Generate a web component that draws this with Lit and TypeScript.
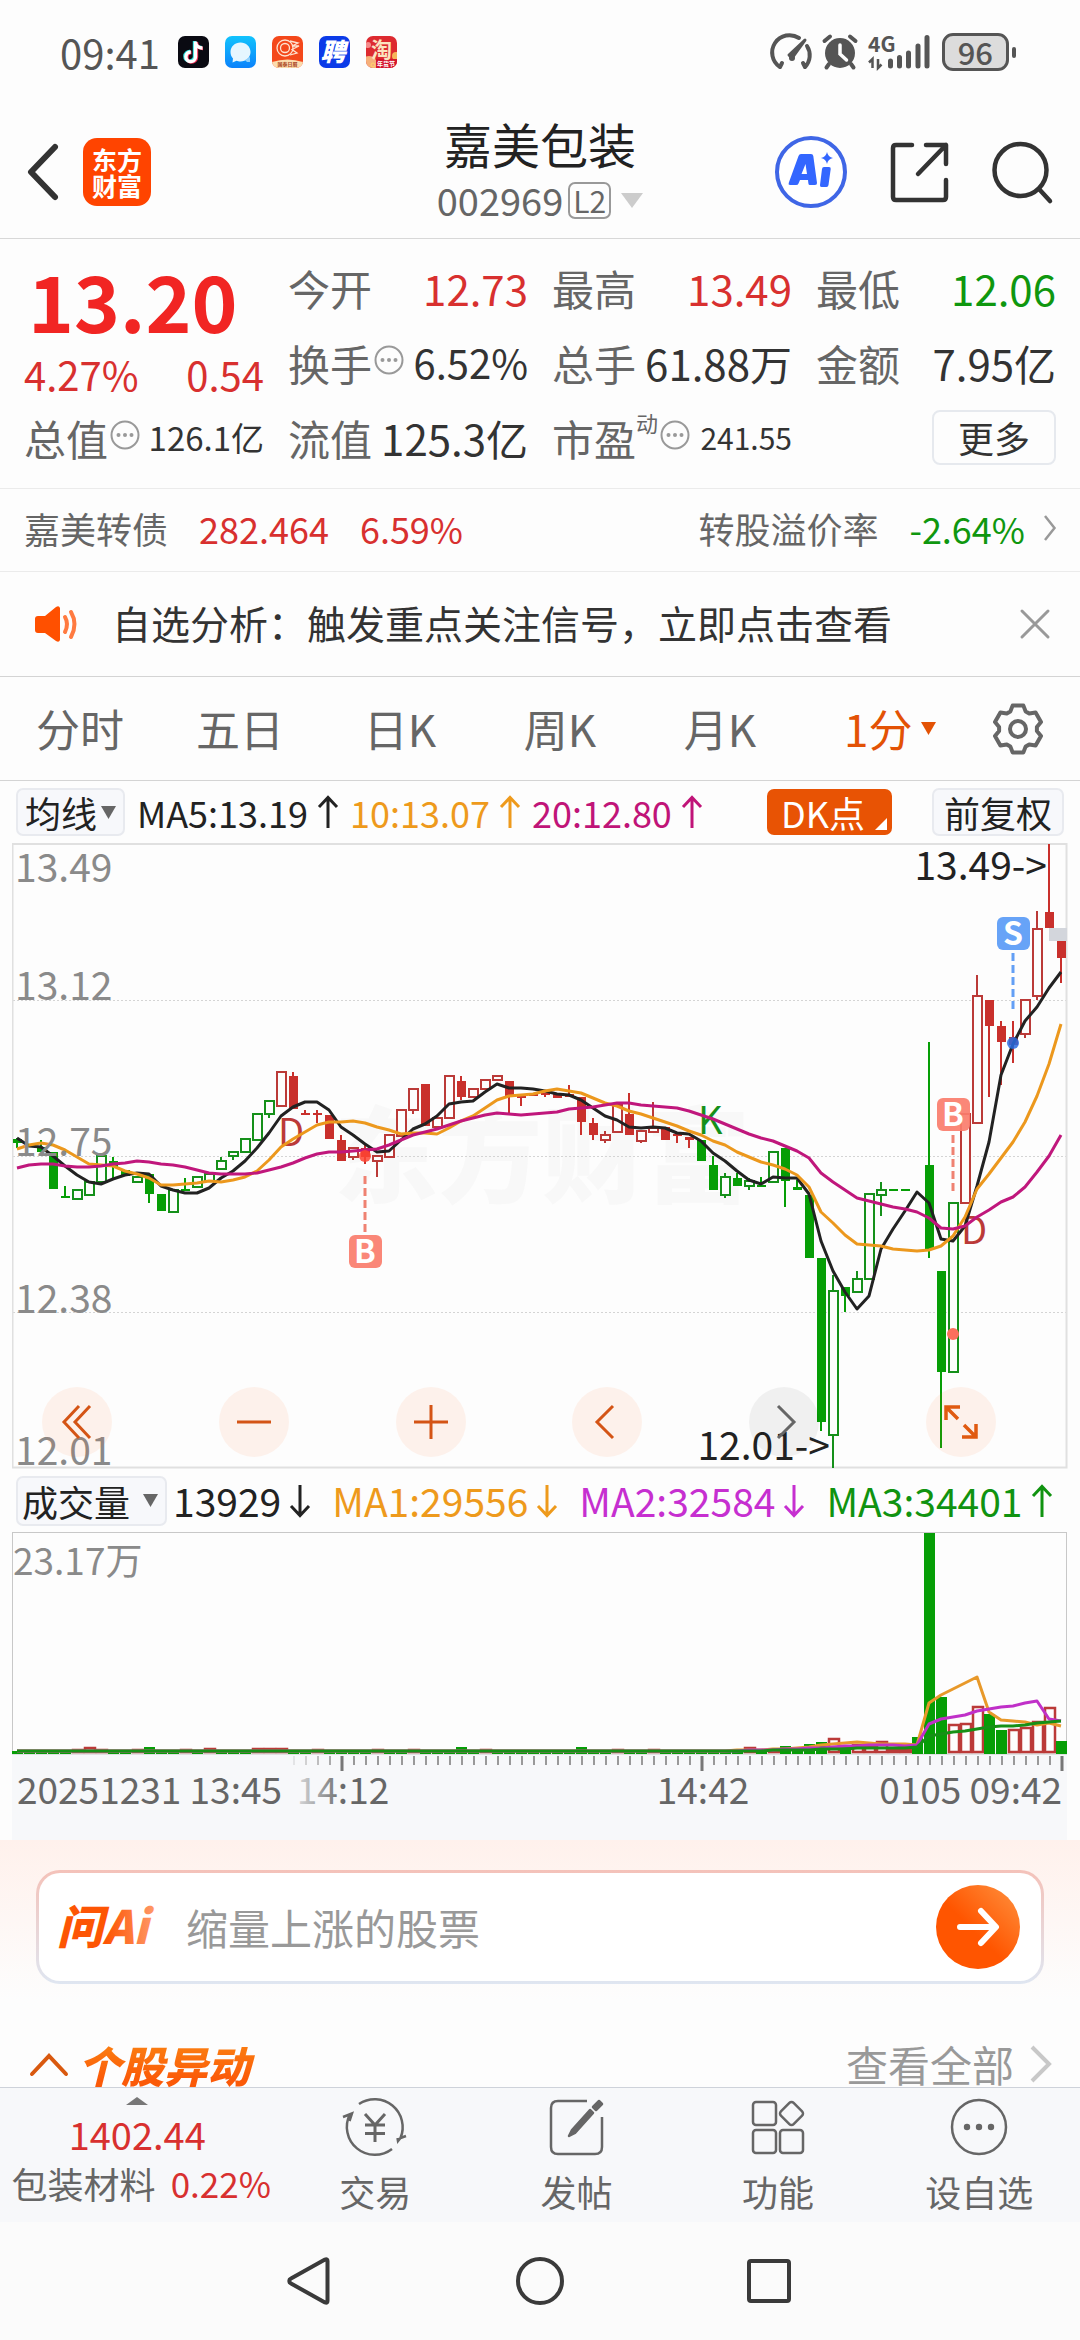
import { LitElement, html, svg, css } from "lit";
import { customElement } from "lit/decorators.js";
import { classMap } from "lit/directives/class-map.js";

const RED = "#c9302c";
const GREEN = "#069e06";
const HOLLOW_RED = "#bb3a38";
const HOLLOW_GREEN = "#15901a";

/* Candle: index, direction (r/g), filled (1) or hollow (0), body top, body bottom, wick top, wick bottom */
type Candle = [number, "r" | "g", 0 | 1, number, number, number, number];

const CANDLES: Candle[] = [
  [0, "g", 1, 1140, 1144, 1139, 1149], [2, "g", 1, 1148, 1153, 1141, 1153], [3, "g", 1, 1153, 1190, 1153, 1190],
  [4, "g", 1, 1197, 1199, 1187, 1199], [5, "g", 0, 1191, 1200, 1191, 1200], [6, "g", 0, 1183, 1196, 1183, 1196],
  [7, "g", 0, 1157, 1183, 1157, 1183], [8, "g", 1, 1162, 1168, 1158, 1179], [9, "g", 1, 1171, 1177, 1171, 1177],
  [10, "g", 0, 1178, 1183, 1178, 1183], [11, "g", 1, 1175, 1195, 1175, 1204], [12, "g", 1, 1195, 1212, 1195, 1212],
  [13, "g", 0, 1191, 1213, 1191, 1213], [14, "g", 1, 1190, 1192, 1179, 1192], [15, "g", 0, 1178, 1188, 1178, 1188],
  [16, "g", 0, 1175, 1182, 1175, 1182], [17, "g", 0, 1162, 1170, 1158, 1170], [18, "g", 0, 1153, 1157, 1153, 1161],
  [19, "g", 0, 1140, 1153, 1140, 1153], [20, "g", 0, 1115, 1141, 1115, 1141], [21, "g", 0, 1102, 1115, 1102, 1119],
  [22, "r", 0, 1073, 1107, 1073, 1107], [23, "r", 1, 1077, 1110, 1073, 1110], [24, "r", 1, 1114, 1116, 1111, 1116],
  [25, "r", 1, 1114, 1116, 1111, 1124], [26, "r", 1, 1116, 1140, 1116, 1140], [27, "r", 1, 1141, 1162, 1136, 1162],
  [28, "r", 0, 1149, 1158, 1149, 1161], [29, "r", 1, 1149, 1158, 1146, 1165], [30, "r", 0, 1157, 1162, 1157, 1178],
  [31, "r", 0, 1136, 1158, 1136, 1158], [32, "r", 0, 1111, 1137, 1111, 1137], [33, "r", 0, 1090, 1111, 1090, 1115],
  [34, "r", 1, 1085, 1127, 1085, 1127], [35, "r", 0, 1119, 1128, 1119, 1128], [36, "r", 0, 1077, 1119, 1077, 1119],
  [37, "r", 1, 1082, 1098, 1077, 1101], [38, "r", 0, 1090, 1098, 1090, 1098], [39, "r", 0, 1081, 1090, 1081, 1090],
  [40, "r", 0, 1077, 1081, 1077, 1081], [41, "r", 1, 1082, 1098, 1082, 1115], [42, "r", 1, 1097, 1099, 1095, 1107],
  [43, "r", 1, 1094, 1097, 1094, 1097], [44, "r", 1, 1094, 1096, 1094, 1098], [45, "r", 1, 1094, 1099, 1094, 1099],
  [46, "r", 1, 1095, 1098, 1086, 1098], [47, "r", 1, 1098, 1123, 1098, 1136], [48, "r", 1, 1124, 1136, 1119, 1141],
  [49, "r", 0, 1136, 1141, 1132, 1144], [50, "r", 0, 1106, 1133, 1106, 1133], [51, "r", 1, 1115, 1136, 1094, 1136],
  [52, "r", 0, 1132, 1142, 1132, 1144], [53, "r", 0, 1129, 1133, 1103, 1133], [54, "r", 1, 1128, 1141, 1128, 1141],
  [55, "r", 1, 1135, 1137, 1135, 1144], [56, "r", 1, 1138, 1141, 1138, 1149], [57, "g", 1, 1141, 1162, 1141, 1162],
  [58, "g", 1, 1166, 1191, 1157, 1191], [59, "g", 0, 1178, 1196, 1174, 1199], [60, "g", 1, 1179, 1187, 1174, 1187],
  [61, "g", 0, 1182, 1187, 1179, 1191], [62, "g", 1, 1186, 1188, 1178, 1188], [63, "g", 0, 1153, 1183, 1153, 1183],
  [64, "g", 1, 1149, 1182, 1149, 1208], [65, "g", 1, 1188, 1191, 1181, 1191], [66, "g", 1, 1196, 1259, 1196, 1259],
  [67, "g", 1, 1259, 1423, 1259, 1432], [68, "g", 0, 1292, 1436, 1276, 1469], [69, "g", 1, 1288, 1297, 1288, 1313],
  [70, "g", 0, 1280, 1293, 1272, 1293], [71, "g", 0, 1195, 1280, 1195, 1280], [72, "g", 0, 1191, 1196, 1183, 1217],
  [73, "g", 1, 1190, 1192, 1190, 1192], [74, "g", 1, 1190, 1192, 1190, 1192], [76, "g", 1, 1166, 1250, 1043, 1259],
  [77, "g", 1, 1272, 1373, 1272, 1449], [78, "g", 0, 1204, 1373, 1204, 1373], [79, "r", 0, 1115, 1204, 1115, 1204],
  [80, "r", 0, 997, 1124, 976, 1124], [81, "r", 1, 1001, 1027, 1001, 1098], [82, "r", 1, 1027, 1043, 1022, 1086],
  [83, "r", 1, 1038, 1046, 1022, 1064], [84, "r", 0, 1001, 1035, 1001, 1039], [85, "r", 0, 930, 997, 912, 1001],
  [86, "r", 1, 913, 929, 845, 929], [87, "r", 1, 942, 959, 942, 984],
];

const MA5 = [1139,1147,1148,1157,1167,1176,1183,1185,1180,1176,1174,1175,1187,1191,1194,1194,1189,1179,1172,1162,1149,1134,1117,1108,1103,1103,1111,1128,1136,1145,1153,1152,1141,1130,1125,1117,1105,1103,1102,1093,1085,1089,1089,1090,1092,1095,1096,1101,1109,1117,1121,1128,1129,1128,1129,1134,1135,1142,1154,1162,1172,1181,1185,1178,1179,1179,1195,1242,1272,1293,1310,1297,1250,1230,1212,1193,1204,1240,1242,1227,1187,1143,1076,1045,1022,1008,989,973];
const MA10 = [1150,1146,1144,1146,1151,1158,1165,1166,1167,1172,1175,1179,1186,1186,1185,1184,1182,1183,1181,1178,1172,1161,1148,1140,1133,1126,1123,1123,1122,1124,1128,1131,1135,1134,1134,1135,1129,1122,1117,1109,1101,1097,1096,1095,1092,1090,1092,1094,1099,1104,1107,1112,1115,1119,1123,1127,1132,1136,1142,1146,1153,1158,1163,1166,1170,1176,1188,1213,1224,1236,1245,1246,1247,1250,1251,1252,1251,1247,1237,1218,1190,1175,1159,1143,1123,1097,1065,1025];
const MA20 = [1169,1166,1165,1165,1167,1168,1168,1167,1165,1164,1162,1163,1165,1166,1168,1171,1174,1175,1175,1175,1174,1171,1168,1164,1159,1155,1153,1153,1152,1151,1150,1146,1141,1136,1133,1130,1126,1122,1119,1116,1114,1115,1116,1115,1114,1113,1110,1109,1108,1106,1104,1104,1106,1107,1108,1109,1112,1116,1120,1125,1130,1135,1139,1142,1147,1152,1159,1174,1183,1191,1199,1202,1205,1208,1210,1213,1219,1229,1230,1227,1218,1211,1203,1198,1188,1173,1157,1136];

/* Volume bars that rise above the flat early session: index -> [direction, top] */
const VOLUMES: Record<number, ["r" | "g", number]> = {
  5: ["r", 1751], 6: ["r", 1749], 7: ["r", 1751], 10: ["r", 1751], 11: ["g", 1748], 14: ["r", 1751], 16: ["r", 1750],
  20: ["r", 1750], 21: ["r", 1750], 22: ["r", 1750], 25: ["r", 1751], 30: ["r", 1751], 33: ["r", 1751],
  37: ["g", 1748], 39: ["r", 1751], 47: ["g", 1748], 50: ["r", 1751], 53: ["r", 1751], 61: ["r", 1749],
  63: ["r", 1751], 64: ["g", 1747], 66: ["g", 1745], 67: ["g", 1743], 68: ["r", 1740], 69: ["g", 1748],
  70: ["r", 1746], 71: ["r", 1748], 72: ["r", 1743], 73: ["r", 1751], 74: ["r", 1751], 75: ["g", 1738],
  76: ["g", 1534], 77: ["g", 1698], 78: ["r", 1726], 79: ["r", 1725], 80: ["r", 1708], 81: ["g", 1715],
  82: ["g", 1731], 83: ["r", 1731], 84: ["r", 1729], 85: ["r", 1723], 86: ["r", 1709], 87: ["g", 1742],
};

const flat = (n: number, y: number) => Array.from({ length: n }, () => y);
const VMA1 = [...flat(60, 1752), 1751,1751,1751,1750,1750,1749,1748,1746,1745,1744,1743,1744,1745,1745,1745,1746,1704,1696,1690,1684,1678,1713,1721,1722,1723,1726,1724,1727];
const VMA2 = [...flat(60, 1752), 1752,1751,1751,1751,1750,1750,1749,1749,1748,1747,1747,1746,1746,1746,1747,1746,1725,1720,1718,1716,1712,1710,1708,1707,1704,1702,1720,1722];
const VMA3 = [...flat(60, 1752), 1752,1752,1752,1751,1751,1751,1751,1750,1750,1750,1749,1749,1749,1749,1749,1748,1737,1735,1733,1732,1730,1728,1727,1727,1726,1724,1723,1722];

const cx = (i: number) => 17 + 12 * i;
const line = (ys: number[]) => ys.map((y, i) => `${cx(i)},${y}`).join(" ");

const gearPoints = Array.from({ length: 6 }, (_, k) =>
  [[-24, 19], [-13, 24], [13, 24], [24, 19]].map(([d, r]) => {
    const a = ((60 * k - 90 + d) * Math.PI) / 180;
    return `${(26 + r * Math.cos(a)).toFixed(1)},${(26 + r * Math.sin(a)).toFixed(1)}`;
  }).join(" ")
).join(" ");

const caret = (w: number, h: number) => html`<svg class="caret" width=${w} height=${h} viewBox="0 0 10 10" preserveAspectRatio="none" aria-hidden="true"><path d="M0 0H10L5 10Z" fill="currentColor"/></svg>`;
const arrow = (up: boolean) => html`<svg width="20" height="34" viewBox="0 0 20 34" fill="none" stroke="currentColor" stroke-width="3" aria-hidden="true">
  ${up ? svg`<path d="M10 33V3M1 12L10 2.500L19 12"/>` : svg`<path d="M10 1V31M1 22L10 31.500L19 22"/>`}</svg>`;
const dots = html`<svg class="info" width="30" height="30" viewBox="0 0 30 30" aria-hidden="true"><circle cx="15" cy="15" r="13.500" fill="none" stroke="#999" stroke-width="2"/><g fill="#999"><circle cx="8.500" cy="15" r="2"/><circle cx="15" cy="15" r="2"/><circle cx="21.500" cy="15" r="2"/></g></svg>`;

const base = css`
  :host { display: block; }
  * { box-sizing: border-box; }
  button, select, input {
    font: inherit; color: inherit; background: none; border: 0; padding: 0; margin: 0; border-radius: 0;
    appearance: none; outline: none; text-align: inherit;
  }
  a { color: inherit; text-decoration: none; }
  svg { display: block; flex: none; overflow: visible; }
  text { font-family: "Noto Sans CJK SC", sans-serif; }
`;

@customElement("status-bar")
class StatusBar extends LitElement {
  static styles = [base, css`
    .bar { display: flex; align-items: center; justify-content: space-between; padding: 22px 64px 24px 60px; color: #555; line-height: 60px; }
    .side { display: flex; align-items: center; gap: 16px; }
    .time { font-size: 40px; margin-right: 2px; }
    .right { gap: 10px; }
    .battery { display: flex; align-items: center; gap: 3px; }
    .cell { border: 3px solid #555; border-radius: 11px; background: #dcdcdc; padding: 0 13px; font-size: 31px; line-height: 32px; font-weight: 500; }
    .nub { width: 4px; height: 11px; border-radius: 2px; background: #555; }
  `];
  render() {
    return html`<div class="bar">
      <div class="side">
        <span class="time">09:41</span>
        <svg width="31" height="32" viewBox="0 0 31 32"><rect width="31" height="32" rx="7" fill="#0a0a12"/>
          <g fill="none" stroke-width="3.400"><path d="M16.500 5V20.500A4.800 4.800 0 1 1 12 15.500M16.500 6C17 9.500 20 11.500 23.500 11.500" stroke="#2be5e4"/><path d="M18.500 6V21.500A4.800 4.800 0 1 1 13.500 16.500M18.500 7C19 10.500 22 12.500 25 12.500" stroke="#f5335b"/><path d="M17.500 5.500V21A4.800 4.800 0 1 1 12.800 16M17.500 6.500C18 10 21 12 24.500 12" stroke="#fff"/></g></svg>
        <svg width="31" height="32" viewBox="0 0 31 32"><defs><linearGradient id="sky" x2="0" y2="1"><stop stop-color="#12c3fd"/><stop offset="1" stop-color="#0b82fb"/></linearGradient></defs>
          <rect width="31" height="32" rx="7" fill="url(#sky)"/><path d="M15.500 6.500C21 6.500 25.500 10.500 25.500 16C25.500 21.500 21 25.500 15.500 25.500C14 25.500 12.500 25.200 11.500 24.700L7.500 26.500L8 22.500C6.300 20.700 5.500 18.500 5.500 16C5.500 10.500 10 6.500 15.500 6.500Z" fill="#e6f6ff"/><path d="M20 24L25 21V26H22Z" fill="#8fd0fc"/></svg>
        <svg width="31" height="32" viewBox="0 0 31 32"><defs><clipPath id="r3"><rect width="31" height="32" rx="7"/></clipPath></defs><g clip-path="url(#r3)"><rect width="31" height="32" fill="#f4481b"/><path d="M0 26Q15.500 21 31 26V32H0Z" fill="#fbdcae"/></g>
          <g fill="none" stroke="#fde3d2" stroke-width="1.300"><circle cx="13" cy="12" r="8"/><circle cx="13" cy="12" r="4.500"/><path d="M18 5L26 7L20 10H27L20 13.500L25 17L18 19"/></g>
          <text x="15.500" y="30" font-size="5" font-weight="700" text-anchor="middle" fill="#a8431d">国泰日曆</text></svg>
        <svg width="31" height="32" viewBox="0 0 31 32"><rect width="31" height="32" rx="7" fill="#0b3be8"/><text x="14" y="25" font-size="25" font-weight="900" font-style="italic" text-anchor="middle" fill="#fff">聘</text></svg>
        <svg width="31" height="32" viewBox="0 0 31 32"><defs><clipPath id="r5"><rect width="31" height="32" rx="7"/></clipPath></defs><g clip-path="url(#r5)"><rect width="31" height="32" fill="#dd2a30"/><circle cx="3" cy="28" r="8" fill="#f6b07a"/><circle cx="30" cy="20" r="4" fill="#f6b65a"/><circle cx="2" cy="9" r="3" fill="#f58b8b"/><rect x="10" y="23" width="22" height="9" fill="#d4142c"/></g><circle cx="7" cy="29" r="2" fill="none" stroke="#ffd36a"/>
          <text x="15.500" y="21" font-size="21" font-weight="700" text-anchor="middle" fill="#fbe3c0">淘</text><text x="20" y="30" font-size="6" font-weight="700" text-anchor="middle" fill="#fff">年货节</text></svg>
      </div>
      <div class="side right">
        <svg width="39" height="37" viewBox="0 0 39 37" fill="none" stroke="#555" stroke-width="4" stroke-linecap="round"><path d="M7 33A17 17 0 0 1 26 4M34 12A17 17 0 0 1 32 33M7 33L9 29M32 33L30 29"/><path d="M32 6L19 24L16 21Z" fill="#555" stroke-width="3" stroke-linejoin="round"/><circle cx="19" cy="24" r="3" fill="#555" stroke="none"/></svg>
        <svg width="36" height="36" viewBox="0 0 36 36"><circle cx="18" cy="19" r="15" fill="#555"/><g stroke="#555" stroke-width="4" stroke-linecap="round"><path d="M2.500 7L8 2.500M33.500 7L28 2.500M7 30L4.500 33.500M29 30L31.500 33.500"/></g><path d="M18 11V20L24.500 26" fill="none" stroke="#fff" stroke-width="3.500" stroke-linecap="round"/></svg>
        <svg width="64" height="36" viewBox="0 0 64 36"><text x="0" y="18" font-size="21" font-weight="700" fill="#555">4G</text>
          <g stroke="#555" stroke-width="5" stroke-linecap="round"><path d="M22.500 27V32M31.500 23.500V32M40.500 19V32M50 12V32M59 3.500V32"/></g><path d="M4.500 34V25L1 28.500M10 25V34L13.500 30.500" fill="none" stroke="#555" stroke-width="2.500"/></svg>
        <div class="battery"><span class="cell">96</span><span class="nub"></span></div>
      </div>
    </div>`;
  }
}

@customElement("stock-header")
class StockHeader extends LitElement {
  static styles = [base, css`
    .head { display: grid; grid-template-columns: 1fr auto 1fr; align-items: center; padding: 9px 28px; border-bottom: 1px solid #d8d8d8; }
    .left { display: flex; align-items: center; gap: 24px; }
    .logo { display: block; width: 68px; padding: 8px 0; border-radius: 14px; background: #ff4400; color: #fff; text-align: center; font-size: 25px; line-height: 26px; font-weight: 700; }
    .title { text-align: center; color: #222; }
    .name { font-size: 48px; line-height: 56px; font-weight: 400; margin: 0; }
    .code { display: flex; align-items: center; justify-content: center; gap: 5px; width: 100%; font-size: 38px; line-height: 58px; color: #666; }
    .level { border: 2px solid #999; border-radius: 7px; padding: 0 3px; font-size: 30px; line-height: 33px; }
    .code .caret { color: #ccc; margin-left: 5px; }
    .right { display: flex; align-items: center; justify-content: flex-end; gap: 42px; }
  `];
  render() {
    return html`<header class="head">
      <div class="left">
        <button aria-label="返回"><svg width="31" height="56" viewBox="0 0 31 56" fill="none" stroke="#333" stroke-width="6" stroke-linecap="round" stroke-linejoin="round"><path d="M27 3L3 28L27 53"/></svg></button>
        <a class="logo" href="#home">东方<br>财富</a>
      </div>
      <div class="title">
        <h1 class="name">嘉美包装</h1>
        <button class="code">002969<span class="level">L2</span>${caret(22, 15)}</button>
      </div>
      <div class="right">
        <button aria-label="Ai"><svg width="74" height="74" viewBox="0 0 74 74"><circle cx="37" cy="37" r="34" fill="#fff" stroke="#3f66e6" stroke-width="4"/>
          <path fill="#3366ff" fill-rule="evenodd" d="M27 19H37Q39 19 39.300 21L43 48Q43.200 50 41 50H36Q34.500 50 34.400 48.500L34 45H26L24.500 48.500Q24 50 22 50H16Q14 50 14.700 48L24.500 21Q25.200 19 27 19ZM31.500 29L27.500 39H33Z"/>
          <path fill="#3366ff" d="M50 32H55Q57 32 56.700 34L54.500 50Q54.200 52 52.500 52H47.500Q45.700 52 46 50L48 34Q48.200 32 50 32ZM53 17Q54 22 59 23Q54 24 53 29Q52 24 47 23Q52 22 53 17Z"/></svg></button>
        <button aria-label="分享"><svg width="60" height="60" viewBox="0 0 60 60" fill="none" stroke="#333" stroke-width="4.500" stroke-linecap="round" stroke-linejoin="round"><path d="M22 3H6Q3 3 3 6V55Q3 58 6 58H53Q56 58 56 55V38M36 3H56V22M56 3L28 32"/></svg></button>
        <button aria-label="搜索"><svg width="60" height="62" viewBox="0 0 60 62" fill="none" stroke="#333" stroke-width="4.500" stroke-linecap="round"><circle cx="28.500" cy="29" r="26"/><path d="M47 48L58 60"/></svg></button>
      </div>
    </header>`;
  }
}

@customElement("quote-panel")
class QuotePanel extends LitElement {
  static styles = [base, css`
    .quote { display: grid; grid-template-columns: repeat(4, 1fr); grid-auto-rows: 75px; column-gap: 24px; padding: 11px 24px 13px; border-bottom: 1px solid #ebebeb; font-size: 42px; line-height: 73px; color: #333; white-space: nowrap; }
    .price { grid-row: span 2; color: #f12523; padding-left: 4px; }
    .last { font-size: 78px; line-height: 98px; font-weight: 700; }
    .change { display: flex; justify-content: space-between; margin-left: -4px; font-size: 40px; line-height: 52px; color: #d8302f; }
    .item { display: flex; align-items: center; }
    .label { color: #666; }
    .value { margin-left: auto; }
    .info { margin: 0 0 6px 2px; }
    .sup { align-self: flex-start; font-size: 22px; line-height: 44px; color: #666; }
    .mid { font-size: 40px; }
    .small { font-size: 33px; }
    .tiny { font-size: 30px; }
    .red { color: #d8302f; }
    .green { color: #0f970f; }
    .more { margin-left: auto; padding: 0 24px; border: 2px solid #e6e9ee; border-radius: 8px; font-size: 36px; line-height: 51px; }
    .bond { display: flex; align-items: center; gap: 31px; padding: 0 24px 4px; border-bottom: 1px solid #ebebeb; font-size: 36px; line-height: 78px; color: #666; }
    .premium { margin-left: auto; }
    .chev { margin-left: -12px; }
    .notice { display: flex; align-items: center; padding: 0 30px 0 34px; border-bottom: 1px solid #d4d4d4; font-size: 39px; line-height: 100px; color: #333; }
    .msg { flex: 1; margin-left: 32px; padding-bottom: 4px; }
  `];
  render() {
    return html`<section class="quote">
      <div class="price"><div class="last">13.20</div><div class="change"><span>4.27%</span><span>0.54</span></div></div>
      <div class="item"><span class="label">今开</span><span class="value red">12.73</span></div>
      <div class="item"><span class="label">最高</span><span class="value red">13.49</span></div>
      <div class="item"><span class="label">最低</span><span class="value green">12.06</span></div>
      <div class="item"><span class="label">换手</span>${dots}<span class="value mid">6.52%</span></div>
      <div class="item"><span class="label">总手</span><span class="value">61.88万</span></div>
      <div class="item"><span class="label">金额</span><span class="value">7.95亿</span></div>
      <div class="item"><span class="label">总值</span>${dots}<span class="value small">126.1亿</span></div>
      <div class="item"><span class="label">流值</span><span class="value">125.3亿</span></div>
      <div class="item"><span class="label">市盈</span><span class="sup">动</span>${dots}<span class="value tiny">241.55</span></div>
      <div class="item"><button class="more">更多</button></div>
    </section>
    <a class="bond" href="#bond"><span>嘉美转债</span><span class="red">282.464</span><span class="red">6.59%</span>
      <span class="premium">转股溢价率</span><span class="green">-2.64%</span>
      <svg class="chev" width="12" height="26" viewBox="0 0 12 26" fill="none" stroke="#999" stroke-width="2.500"><path d="M1 1L10.500 13L1 25"/></svg></a>
    <div class="notice">
      <svg width="46" height="38" viewBox="0 0 46 38"><path d="M4 11H11L22 2Q25 0 26 3V35Q25 38 22 36L11 28H4Q1 28 1 25V14Q1 11 4 11Z" fill="#ff5000"/><path d="M31 12Q35 19 31 27M37 7Q44 19 37 32" fill="none" stroke="#ff7a40" stroke-width="4" stroke-linecap="round"/></svg>
      <a class="msg" href="#signal">自选分析：触发重点关注信号，立即点击查看</a>
      <button aria-label="关闭"><svg width="30" height="30" viewBox="0 0 30 30" stroke="#999" stroke-width="3" stroke-linecap="round"><path d="M2 2L28 28M28 2L2 28"/></svg></button>
    </div>`;
  }
}

@customElement("kline-chart")
class KlineChart extends LitElement {
  static styles = [base, css`
    .tabs { display: grid; grid-template-columns: repeat(5, 16fr) 18fr 10fr; align-items: center; border-bottom: 1px solid #d4d4d4; font-size: 44px; line-height: 103px; color: #666; }
    .tab { text-align: center; }
    .period { display: flex; align-items: center; justify-content: center; gap: 8px; color: #e35205; }
    .settings { display: flex; justify-content: flex-end; padding-right: 36px; }
    .row { display: flex; align-items: center; padding: 0 16px; font-size: 36px; line-height: 62px; color: #222; white-space: nowrap; }
    .pill { display: flex; align-items: center; gap: 3px; border: 2px solid #e8eaef; border-radius: 7px; background: #f7f8fb; padding: 0 7px; line-height: 44px; }
    .pill .caret { color: #666; }
    .wide { gap: 12px; padding: 0 7px 0 4px; }
    .ma { display: flex; align-items: center; gap: 10px; margin-left: 12px; }
    .orange { color: #ee9a1c; }
    .magenta { color: #c01478; }
    .violet { color: #c62fd0; }
    .green { color: #109310; }
    .dk { display: flex; align-items: flex-end; gap: 10px; margin-left: auto; padding: 0 5px 0 14px; border-radius: 7px; background: #e85304; color: #fff; line-height: 46px; }
    .dk svg { margin-bottom: 5px; }
    .adjust { margin-left: 40px; padding: 0 10px; }
    .plot { position: relative; margin: 0 12px; }
    .plot > svg { width: 100%; height: auto; overflow: hidden; }
    .tools { position: absolute; left: 30px; right: 72px; bottom: 12px; display: flex; justify-content: space-between; }
    .tool { display: grid; place-items: center; width: 70px; height: 70px; border-radius: 50%; background: rgba(255, 96, 24, 0.08); }
    .off { background: rgba(0, 0, 0, 0.05); }
    .vol { font-size: 39px; line-height: 63px; }
    .vol .pill { font-size: 36px; line-height: 46px; }
    .vol .ma { gap: 9px; margin-left: 22px; }
    .vol .first { margin-left: 6px; }
  `];

  private candle([i, dir, filled, top, bottom, wt, wb]: Candle) {
    const x = cx(i);
    const color = dir === "r" ? (filled ? RED : HOLLOW_RED) : filled ? GREEN : HOLLOW_GREEN;
    return svg`
      ${wt < top ? svg`<path d="M${x} ${wt}V${top}" stroke=${color} stroke-width="2"/>` : null}
      ${wb > bottom ? svg`<path d="M${x} ${bottom}V${wb}" stroke=${color} stroke-width="2"/>` : null}
      ${filled
        ? svg`<rect x=${x - 4} y=${top} width="9" height=${bottom - top} fill=${color}/>`
        : svg`<rect x=${x - 4} y=${top} width="9" height=${bottom - top} fill="#fdfdfd" stroke=${color} stroke-width="2"/>`}`;
  }

  private bar(i: number) {
    const [dir, top] = VOLUMES[i] ?? ["g", 1752];
    return dir === "g"
      ? svg`<rect x=${cx(i) - 5} y=${top} width="11" height=${1755 - top} fill=${GREEN}/>`
      : svg`<rect x=${cx(i) - 4} y=${top} width="10" height=${1753 - top} fill="#fdfdfd" stroke=${HOLLOW_RED} stroke-width="2.500"/>`;
  }

  private marker(x: number, y: number, letter: string, color: string) {
    return svg`<rect x=${x - 16} y=${y} width="33" height="33" rx="6" fill=${color} fill-opacity="0.92"/>
      <text x=${x} y=${y + 28} font-size="32" font-weight="700" text-anchor="middle" fill="#fff">${letter}</text>`;
  }

  private tick(k: number) {
    const x = 294 + 12 * k;
    const major = k === 4 || k === 34 || k === 64;
    return svg`<path d="M${x} 1757V${major ? 1772 : 1766}" stroke=${major ? "#777" : "#999"} stroke-width=${major ? 3 : 2} opacity=${Math.min(1, (k + 1) / 5)}/>`;
  }

  render() {
    const tabs = ["分时", "五日", "日K", "周K", "月K"];
    const indices = Array.from({ length: 88 }, (_, i) => i);
    return html`
      <nav class="tabs">
        ${tabs.map((t) => html`<button class="tab">${t}</button>`)}
        <label class="period"><select aria-label="周期"><option>1分</option></select>${caret(15, 13)}</label>
        <button class="settings" aria-label="设置"><svg width="52" height="52" viewBox="0 0 52 52" fill="none" stroke="#666" stroke-width="4" stroke-linejoin="round"><polygon points=${gearPoints}/><circle cx="26" cy="26" r="8"/></svg></button>
      </nav>
      <div class="row">
        <label class="pill"><select aria-label="指标"><option>均线</option></select>${caret(15, 13)}</label>
        <span class="ma">MA5:13.19${arrow(true)}</span>
        <span class="ma orange">10:13.07${arrow(true)}</span>
        <span class="ma magenta">20:12.80${arrow(true)}</span>
        <button class="dk">DK点<svg width="12" height="12" viewBox="0 0 12 12"><path d="M12 0V12H0Z" fill="#fff"/></svg></button>
        <button class="pill adjust">前复权</button>
      </div>
      <div class="plot">
        <svg viewBox="12 844 1056 626" role="img" aria-label="K线">
          <text x="334" y="1196" font-size="104" font-weight="900" fill="#f8f8f8">东方财富</text>
          <g stroke="#d4d4d4" stroke-width="1" stroke-dasharray="2 2"><path d="M13 1001.500H1066M13 1157.500H1066M13 1313.500H1066"/></g>
          <rect x="12.500" y="845" width="1054" height="623.500" fill="none" stroke="#e0e0e0" stroke-width="2"/>
          ${CANDLES.map((c) => this.candle(c))}
          <rect x="1049" y="929" width="18" height="13" fill="#d3d6dc"/>
          <g font-size="38" fill=${HOLLOW_RED}><text x="278" y="1147">D</text><text x="961" y="1245">D</text><text x="698" y="1135" fill=${HOLLOW_GREEN}>K</text></g>
          <g fill="none" stroke-width="3" stroke-linejoin="round">
            <polyline points=${line(MA5)} stroke="#222"/><polyline points=${line(MA10)} stroke="#ec981d"/><polyline points=${line(MA20)} stroke="#c0177c"/>
          </g>
          <g stroke-width="3" stroke-dasharray="8 4"><path d="M365 1177V1234M953 1136V1192" stroke="#ef8272"/><path d="M1013 954V1011" stroke="#639ff5"/></g>
          <circle cx="365" cy="1157" r="6" fill="#ff4433" fill-opacity="0.85"/><circle cx="953" cy="1335" r="6" fill="#fb6f5c"/><circle cx="1013" cy="1044" r="6" fill="#2a6be0" fill-opacity="0.85"/>
          ${this.marker(365, 1236, "B", "#fa7d6c")}${this.marker(953, 1099, "B", "#fa7d6c")}${this.marker(1013, 918, "S", "#5a9bf6")}
          <g font-size="39" fill="#8a8a8a"><text x="15" y="883">13.49</text><text x="15" y="1001">13.12</text><text x="15" y="1157">12.75</text><text x="15" y="1314">12.38</text><text x="15" y="1466">12.01</text></g>
          <g font-size="39" fill="#222" text-anchor="end"><text x="1047" y="881">13.49-&gt;</text><text x="830" y="1461">12.01-&gt;</text></g>
        </svg>
        <div class="tools">
          <button class="tool" aria-label="快退"><svg width="32" height="36" viewBox="0 0 32 36" fill="none" stroke="#d45415" stroke-width="3"><path d="M18 2L3 18L18 34M29 2L14 18L29 34"/></svg></button>
          <button class="tool" aria-label="缩小"><svg width="34" height="34" viewBox="0 0 34 34" stroke="#d45415" stroke-width="3"><path d="M0 17H34"/></svg></button>
          <button class="tool" aria-label="放大"><svg width="34" height="34" viewBox="0 0 34 34" stroke="#d45415" stroke-width="3"><path d="M0 17H34M17 0V34"/></svg></button>
          <button class="tool" aria-label="左移"><svg width="34" height="34" viewBox="0 0 34 34" fill="none" stroke="#d45415" stroke-width="3"><path d="M23 1L7 17L23 33"/></svg></button>
          <button class=${classMap({ tool: true, off: true })} aria-label="右移"><svg width="34" height="34" viewBox="0 0 34 34" fill="none" stroke="#666" stroke-width="3"><path d="M11 1L27 17L11 33"/></svg></button>
          <button class="tool" aria-label="全屏"><svg width="36" height="36" viewBox="0 0 36 36" fill="none" stroke="#e05a10" stroke-width="3.500"><path d="M3 16V3H17M3 3L15 15M33 20V33H19M33 33L21 21"/></svg></button>
        </div>
      </div>
      <div class="row vol">
        <label class="pill wide"><select aria-label="副图"><option>成交量</option></select>${caret(15, 13)}</label>
        <span class="ma first">13929${arrow(false)}</span>
        <span class="ma orange">MA1:29556${arrow(false)}</span>
        <span class="ma violet">MA2:32584${arrow(false)}</span>
        <span class="ma green">MA3:34401${arrow(true)}</span>
      </div>
      <div class="plot">
        <svg viewBox="12 1533 1056 308" role="img" aria-label="成交量">
          <defs><linearGradient id="fade" gradientUnits="userSpaceOnUse" x1="290" x2="345" y1="0" y2="0"><stop stop-color="#666" stop-opacity="0.1"/><stop offset="1" stop-color="#666"/></linearGradient></defs>
          <rect x="12" y="1755" width="1055" height="86" fill="#f7f8fa"/>
          <rect x="12.500" y="1533.500" width="1054" height="221.500" fill="none" stroke="#c8c8c8"/>
          <text x="13" y="1576" font-size="37" fill="#8a8a8a">23.17万</text>
          ${indices.map((i) => this.bar(i))}
          <g fill="none" stroke-width="3" stroke-linejoin="round">
            <polyline points=${line(VMA1)} stroke="#e8992a"/><polyline points=${line(VMA2)} stroke="#c030c8"/><polyline points=${line(VMA3)} stroke="#169016"/>
          </g>
          ${Array.from({ length: 65 }, (_, k) => this.tick(k))}
          <g font-size="37" fill="#666"><text x="17" y="1805">20251231 13:45</text><text x="343" y="1805" text-anchor="middle" fill="url(#fade)">14:12</text><text x="703" y="1805" text-anchor="middle">14:42</text><text x="1062" y="1805" text-anchor="end">0105 09:42</text></g>
        </svg>
      </div>`;
  }
}

@customElement("ask-panel")
class AskPanel extends LitElement {
  static styles = [base, css`
    .wrap { padding: 30px 36px 0; background: linear-gradient(#fff1ec, #fdfdfd 160px); }
    .box { display: flex; align-items: center; padding: 12px 21px; border: 3px solid transparent; border-radius: 24px; background: linear-gradient(#fff, #fff) padding-box, linear-gradient(#f4c2b9, #dfe6f1) border-box; }
    .brand { flex: none; width: 102px; height: 50px; }
    .brand text { font-weight: 900; font-style: italic; }
    .ask { flex: 1; min-width: 0; margin-left: 24px; font-size: 42px; line-height: 60px; color: #333; }
    .ask::placeholder { color: #999; opacity: 1; }
    .go { display: grid; place-items: center; width: 84px; height: 84px; border-radius: 50%; background: linear-gradient(45deg, #ff5500 45%, #ff9340); }
    .head { display: flex; align-items: center; margin: 49px -8px 0 -6px; line-height: 62px; }
    .heading { margin: 0 0 0 10px; padding-right: 8px; font-size: 43px; font-weight: 900; font-style: italic; background: linear-gradient(#fb7a10 25%, #fb5a08 75%); background-clip: text; -webkit-background-clip: text; color: transparent; }
    .all { display: flex; align-items: center; gap: 16px; margin-left: auto; font-size: 42px; color: #999; }
  `];
  render() {
    return html`<section class="wrap">
      <div class="box">
        <svg class="brand" viewBox="0 0 102 50"><defs><linearGradient id="brand"><stop offset="0.500" stop-color="#fd5504"/><stop offset="1" stop-color="#ff9a6a"/></linearGradient></defs><text x="-3" y="42" font-size="46" fill="url(#brand)">问Ai</text></svg>
        <input class="ask" type="text" aria-label="问Ai" placeholder="缩量上涨的股票">
        <button class="go" aria-label="提问"><svg width="44" height="40" viewBox="0 0 44 40" fill="none" stroke="#fff" stroke-width="6" stroke-linecap="round" stroke-linejoin="round"><path d="M4 20H39M25 4L40 20L25 36"/></svg></button>
      </div>
      <div class="head">
        <svg width="38" height="24" viewBox="0 0 38 24" fill="none" stroke="#d9590f" stroke-width="4" stroke-linecap="round"><path d="M2 22L19 4L36 22"/></svg>
        <h2 class="heading">个股异动</h2>
        <a class="all" href="#all">查看全部<svg width="22" height="38" viewBox="0 0 22 38" fill="none" stroke="#c8c8c8" stroke-width="4"><path d="M2 2L19 19L2 36"/></svg></a>
      </div>
    </section>`;
  }
}

@customElement("bottom-bar")
class BottomBar extends LitElement {
  static styles = [base, css`
    .bar { display: grid; grid-template-columns: 274fr repeat(4, 201fr); border-top: 1px solid #ced2da; background: #f7f8fa; color: #666; font-size: 36px; }
    .index { display: flex; flex-direction: column; align-items: center; padding-top: 9px; line-height: 50px; white-space: nowrap; }
    .point { font-size: 38px; line-height: 48px; margin-top: 5px; color: #d8302f; }
    .sector { display: flex; gap: 15px; margin-left: 8px; }
    .red { font-size: 35px; color: #d8302f; }
    .tab { display: flex; flex-direction: column; align-items: center; padding: 9px 0 1px; line-height: 60px; gap: 4px; }
    .nav { display: flex; justify-content: center; gap: 181px; padding: 35px 0; background: #fbfbfb; }
  `];
  render() {
    const g = (shape: unknown, label: string) => html`<button class="tab"><svg width="66" height="60" viewBox="0 0 66 60" fill="none" stroke="#666" stroke-width="2.500">${shape}</svg>${label}</button>`;
    return html`<nav class="bar">
      <a class="index" href="#sector">
        <svg width="22" height="8" viewBox="0 0 22 8"><path d="M11 0L22 8H0Z" fill="#777"/></svg>
        <span class="point">1402.44</span>
        <span class="sector">包装材料<span class="red">0.22%</span></span>
      </a>
      ${g(svg`<path d="M17 7A28 28 0 0 1 58.500 41M58.500 41L56 44L55.500 41M58.500 41L64 39M50 52A28 28 0 0 1 8 17M1 20L10 16.500L7.500 24"/><path d="M23 17L33 28L43 17M33 28V45M23 28H43M23 36.500H43" stroke-width="3"/>`, "交易")}
      ${g(svg`<path d="M43 4H14Q7 4 7 11V50Q7 57 14 57H51Q58 57 58 50V20"/><path d="M55 4L58 7L52 13L49 10ZM46 13L49 16L31 36L25 39L28 33Z" fill="#666" stroke-linejoin="round"/>`, "发帖")}
      ${g(svg`<rect x="8" y="5" width="23" height="23" rx="3"/><rect x="8" y="33" width="23" height="23" rx="3"/><rect x="35" y="33" width="23" height="23" rx="3"/><rect x="37.500" y="7.500" width="18" height="18" rx="3" transform="rotate(45 46.500 16.500)"/>`, "功能")}
      ${g(svg`<circle cx="33" cy="30" r="27"/><g fill="#666" stroke="none"><circle cx="21" cy="30" r="3.200"/><circle cx="33" cy="30" r="3.200"/><circle cx="45" cy="30" r="3.200"/></g>`, "设自选")}
    </nav>
    <nav class="nav">
      <button aria-label="返回"><svg width="48" height="48" viewBox="0 0 48 48" fill="none" stroke="#3a3a3a" stroke-width="4" stroke-linejoin="round"><path d="M2.500 24Q2 22.500 4 21.500L38 2.500Q40.500 1.500 40.500 4V44Q40.500 46.500 38 45.500L4 26.500Q2 25.500 2.500 24Z"/></svg></button>
      <button aria-label="主页"><svg width="48" height="48" viewBox="0 0 48 48" fill="none" stroke="#3a3a3a" stroke-width="4"><circle cx="24" cy="24" r="22"/></svg></button>
      <button aria-label="最近任务"><svg width="48" height="48" viewBox="0 0 48 48" fill="none" stroke="#3a3a3a" stroke-width="4"><rect x="4" y="4" width="40" height="40" rx="2"/></svg></button>
    </nav>`;
  }
}

@customElement("app-root")
class AppRoot extends LitElement {
  static styles = css`
    :host { display: flex; flex-direction: column; height: 100vh; background: #fdfdfd; font-family: "Noto Sans CJK SC", "Liberation Sans", sans-serif; }
    .content { flex: 1; min-height: 0; overflow-y: auto; scrollbar-width: none; }
  `;
  render() {
    return html`
      <status-bar></status-bar>
      <stock-header></stock-header>
      <main class="content">
        <quote-panel></quote-panel>
        <kline-chart></kline-chart>
        <ask-panel></ask-panel>
      </main>
      <bottom-bar></bottom-bar>`;
  }
}
